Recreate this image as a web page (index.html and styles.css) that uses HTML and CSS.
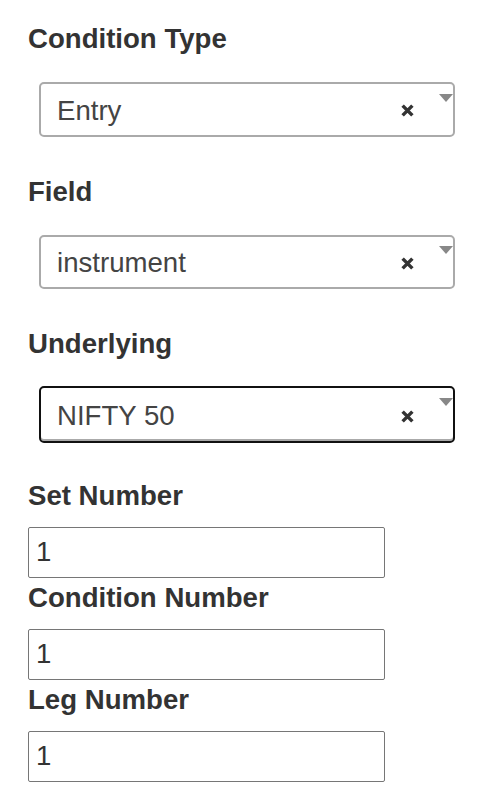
FILE: index.html
```html
<!DOCTYPE html>
<html>
<head>
<meta charset="utf-8">
<link rel="stylesheet" href="styles.css">
</head>
<body>
<div class="page">
  <div class="sel-group">
    <div class="label">Condition Type</div>
    <div class="select">
      <span class="sel-text">Entry</span>
      <svg class="clear" viewBox="0 0 12 12"><path d="M1.5 1.5L10.5 10.5M10.5 1.5L1.5 10.5"/></svg>
      <span class="arrow"></span>
    </div>
  </div>
  <div class="sel-group">
    <div class="label">Field</div>
    <div class="select">
      <span class="sel-text">instrument</span>
      <svg class="clear" viewBox="0 0 12 12"><path d="M1.5 1.5L10.5 10.5M10.5 1.5L1.5 10.5"/></svg>
      <span class="arrow"></span>
    </div>
  </div>
  <div class="sel-group last">
    <div class="label">Underlying</div>
    <div class="select focused">
      <span class="sel-text">NIFTY 50</span>
      <svg class="clear" viewBox="0 0 12 12"><path d="M1.5 1.5L10.5 10.5M10.5 1.5L1.5 10.5"/></svg>
      <span class="arrow"></span>
    </div>
  </div>
  <div class="num-group">
    <div class="label num-label">Set Number</div>
    <input class="num" type="text" value="1">
  </div>
  <div class="num-group">
    <div class="label num-label">Condition Number</div>
    <input class="num" type="text" value="1">
  </div>
  <div class="num-group">
    <div class="label num-label">Leg Number</div>
    <input class="num" type="text" value="1">
  </div>
</div>
</body>
</html>
```

FILE: styles.css
```css
html, body {
  margin: 0;
  padding: 0;
  background: #fff;
}
body {
  font-family: "Liberation Sans", Arial, sans-serif;
  font-size: 27.6px;
  color: #333;
}
.page {
  padding: 23px 33px 0 28px;
}
.label {
  font-weight: bold;
  line-height: 32px;
  color: #333;
}
.sel-group {
  margin-bottom: 39px;
}
.sel-group.last {
  margin-bottom: 37px;
}
.sel-group .label {
  margin-bottom: 27px;
}
.select {
  box-sizing: border-box;
  margin-left: 11px;
  width: 416px;
  height: 54.5px;
  border: 2px solid #aaa;
  border-radius: 5px;
  display: flex;
  align-items: center;
  padding-left: 16px;
  padding-right: 0;
}
.select.focused {
  border-color: #111;
  box-shadow: inset 0 -2px 0 #aaa;
  margin-top: -1px;
  height: 57px;
}
.sel-text {
  flex: 1;
  color: #444;
  line-height: 32px;
  padding-top: 3px;
}
.clear {
  width: 13px;
  height: 13px;
  margin-top: 3px;
  margin-right: 25px;
}
.clear path {
  stroke: #333;
  stroke-width: 3.2;
  stroke-linecap: butt;
  fill: none;
}
.arrow {
  align-self: flex-start;
  margin-top: 9.5px;
  width: 0;
  height: 0;
  border-left: 7.5px solid transparent;
  border-right: 7.5px solid transparent;
  border-top: 8.5px solid #888;
}
.num-label {
  margin-bottom: 14.5px;
}
.num {
  display: block;
  box-sizing: border-box;
  width: 357px;
  height: 51px;
  margin: 0 0 4.5px 0;
  padding: 0 0 0 7px;
  border: 1px solid #767676;
  border-radius: 2px;
  font-family: "Liberation Sans", Arial, sans-serif;
  font-size: 27.6px;
  color: #333;
  background: #fff;
  outline: none;
}
```
